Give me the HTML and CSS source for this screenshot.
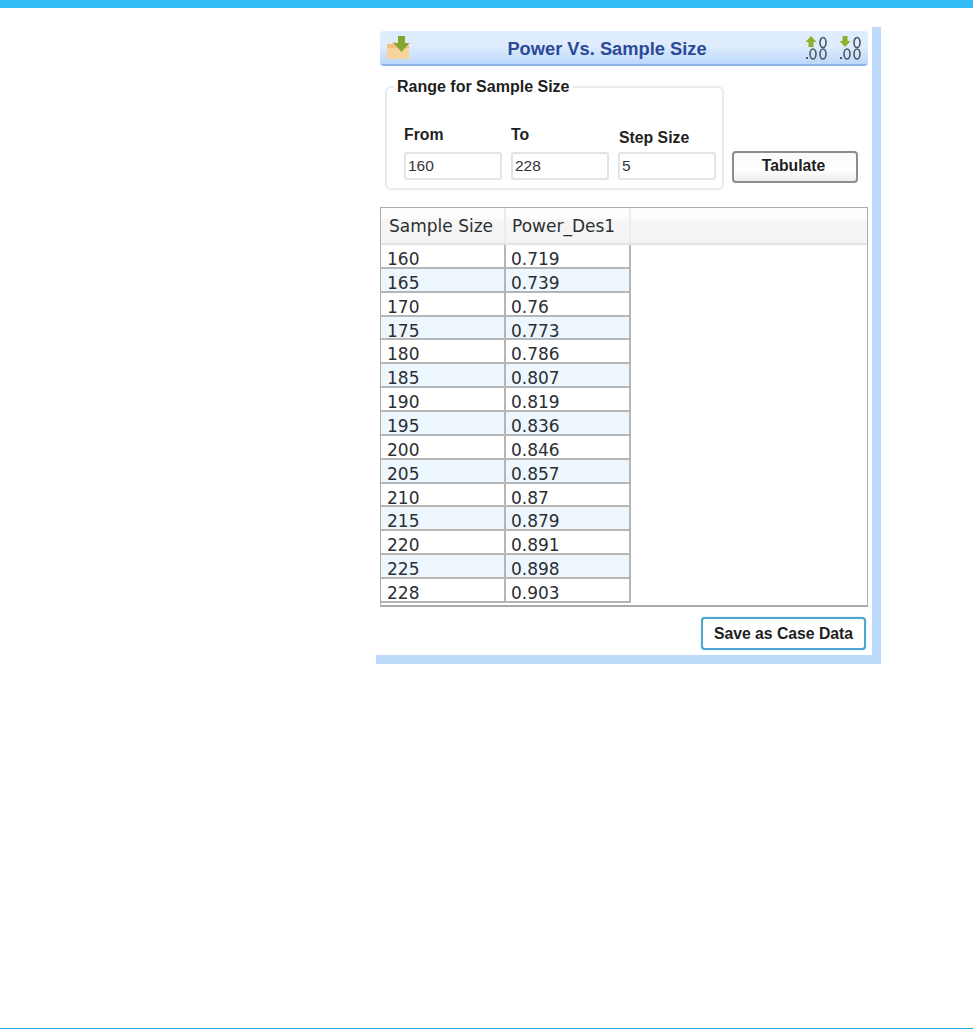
FILE: index.html
```html
<!DOCTYPE html>
<html lang="en">
<head>
<meta charset="utf-8">
<title>Power Vs. Sample Size</title>
<link rel="stylesheet" href="styles.css">
</head>
<body>
<div class="top-bar"></div>
<main class="panel">
  <header class="title-bar">
    <svg class="icon-folder" width="24" height="24" viewBox="0 0 24 24">
      <path d="M0 9a1 1 0 0 1 1-1h4l1-2h3v3h12a1 1 0 0 1 1 1v12a1 1 0 0 1-1 1H1a1 1 0 0 1-1-1z" fill="#eec17c"/>
      <path d="M0 12h22v10a1 1 0 0 1-1 1H1a1 1 0 0 1-1-1z" fill="#f6d49b"/>
      <path d="M11 0h7v7h4.500l-8 9-8-9H11z" fill="#84a62e"/>
    </svg>
    <h1 class="title">Power Vs. Sample Size</h1>
    <div class="title-tools">
      <svg class="icon-dec" width="22" height="24" viewBox="0 0 22 24">
        <path d="M6 0l5.500 6H8.500v5h-5V6H.5z" fill="#8fb028"/>
        <g fill="none" stroke="#4b5860" stroke-width="1.600">
          <ellipse cx="18" cy="6.500" rx="3" ry="5"/>
          <ellipse cx="8" cy="18" rx="3" ry="5"/>
          <ellipse cx="18" cy="18" rx="3" ry="5"/>
        </g>
        <rect x="1" y="21" width="2" height="2" fill="#4b5860"/>
      </svg>
      <svg class="icon-dec" width="22" height="24" viewBox="0 0 22 24">
        <path d="M3.500 0h5v5h3L6 11 .5 5h3z" fill="#8fb028"/>
        <g fill="none" stroke="#4b5860" stroke-width="1.600">
          <ellipse cx="18" cy="6.500" rx="3" ry="5"/>
          <ellipse cx="8" cy="18" rx="3" ry="5"/>
          <ellipse cx="18" cy="18" rx="3" ry="5"/>
        </g>
        <rect x="1" y="21" width="2" height="2" fill="#4b5860"/>
      </svg>
    </div>
  </header>

  <section class="range-row">
    <fieldset class="range-group">
      <legend class="range-legend">Range for Sample Size</legend>
      <div class="range-fields">
        <label class="field"><span class="field-label">From</span><input class="field-input" value="160"></label>
        <label class="field"><span class="field-label">To</span><input class="field-input" value="228"></label>
        <label class="field field-step"><span class="field-label">Step Size</span><input class="field-input" value="5"></label>
      </div>
    </fieldset>
    <button class="btn btn-tabulate">Tabulate</button>
  </section>

  <section class="grid">
    <div class="grid-head">
      <div class="head-cell col-a">Sample Size</div>
      <div class="head-cell col-b">Power_Des1</div>
    </div>
    <div class="grid-body">
      <div class="row"><div class="cell col-a">160</div><div class="cell col-b">0.719</div></div>
      <div class="row"><div class="cell col-a">165</div><div class="cell col-b">0.739</div></div>
      <div class="row"><div class="cell col-a">170</div><div class="cell col-b">0.76</div></div>
      <div class="row"><div class="cell col-a">175</div><div class="cell col-b">0.773</div></div>
      <div class="row"><div class="cell col-a">180</div><div class="cell col-b">0.786</div></div>
      <div class="row"><div class="cell col-a">185</div><div class="cell col-b">0.807</div></div>
      <div class="row"><div class="cell col-a">190</div><div class="cell col-b">0.819</div></div>
      <div class="row"><div class="cell col-a">195</div><div class="cell col-b">0.836</div></div>
      <div class="row"><div class="cell col-a">200</div><div class="cell col-b">0.846</div></div>
      <div class="row"><div class="cell col-a">205</div><div class="cell col-b">0.857</div></div>
      <div class="row"><div class="cell col-a">210</div><div class="cell col-b">0.87</div></div>
      <div class="row"><div class="cell col-a">215</div><div class="cell col-b">0.879</div></div>
      <div class="row"><div class="cell col-a">220</div><div class="cell col-b">0.891</div></div>
      <div class="row"><div class="cell col-a">225</div><div class="cell col-b">0.898</div></div>
      <div class="row"><div class="cell col-a">228</div><div class="cell col-b">0.903</div></div>
    </div>
  </section>

  <div class="actions">
    <button class="btn btn-save">Save as Case Data</button>
  </div>
</main>
<div class="bottom-line"></div>
</body>
</html>
```
FILE: styles.css
```css
* { box-sizing: border-box; }
html, body { margin: 0; height: 100%; }
body {
  display: flex;
  flex-direction: column;
  background: #fff;
  font-family: "Liberation Sans", Arial, sans-serif;
  color: #1f1f1f;
}
.top-bar { height: 8px; background: #33bbf5; flex: none; }
.bottom-line { height: 1px; background: #1fa6e0; margin-top: auto; flex: none; }

.panel {
  width: 505px;
  height: 637px;
  margin: 19px 0 0 376px;
  padding: 4px 4px 0 4px;
  border-right: 9px solid #bfdbfb;
  border-bottom: 9px solid #bfdbfb;
  flex: none;
}

.title-bar {
  height: 35px;
  display: flex;
  align-items: center;
  padding: 0 7px;
  border-radius: 4px;
  border-bottom: 2px solid #8fb4e8;
  background: linear-gradient(#dfecfd 0%, #dfecfd 45%, #bcd8fb 100%);
}
.title {
  flex: 1;
  margin: 0;
  padding: 3px 2px 0 0;
  text-align: center;
  font-size: 18.300px;
  font-weight: bold;
  color: #2b4a98;
}
.icon-folder { flex: none; }
.title-tools { display: flex; gap: 12px; }

.range-row {
  display: flex;
  align-items: flex-start;
  margin: 14px 0 0 5px;
}
.range-group {
  width: 339px;
  height: 110px;
  margin: 0;
  padding: 0 6px 0 17px;
  border: 2px solid #e6ecf0;
  border-radius: 6px;
}
.range-legend {
  margin-left: -10px;
  padding: 0 3px;
  font-size: 16px;
  font-weight: bold;
  line-height: 14px;
}
.range-fields { display: flex; gap: 9px; margin-top: 33px; align-items: flex-end; }
.field { display: flex; flex-direction: column; width: 98px; }
.field-label { font-size: 15.800px; font-weight: bold; line-height: 16px; margin-bottom: 9px; }
.field-step .field-label { margin-bottom: 6px; padding-left: 1px; }
.field-input {
  width: 98px;
  height: 28px;
  padding: 2px;
  border: 2px solid #e0e5e9;
  border-radius: 3px;
  font: 15.500px "Liberation Sans", Arial, sans-serif;
  color: #33343a;
  background: #fff;
  outline: none;
}

.btn {
  font: bold 15.750px "Liberation Sans", Arial, sans-serif;
  color: #1f1f1f;
  background: #fff;
  padding: 0;
  cursor: pointer;
}
.btn-tabulate {
  width: 126px;
  height: 32px;
  margin: 71px 0 0 8px;
  padding: 0 3px 2px 0;
  border: 2px solid #8d8d8d;
  border-radius: 4px;
  background: linear-gradient(#fafafa, #fff 60%, #eeeeee);
}

.grid {
  height: 400px;
  margin-top: 17px;
  border: 1px solid #ababab;
  border-bottom-width: 2px;
  overflow: hidden;
  font-family: "DejaVu Sans", Verdana, sans-serif;
  font-size: 17px;
  color: #2b2f33;
}
.grid-head {
  display: flex;
  height: 37px;
  background: linear-gradient(#fdfdfd 0%, #fdfdfd 32%, #f6f6f6 33%, #f3f3f3 100%);
  border-bottom: 2px solid #e3e3e3;
}
.head-cell {
  display: flex;
  align-items: center;
  padding: 0 0 0 8px;
  border-right: 2px solid #ececec;
}
.head-cell.col-b { padding-left: 6px; }
.col-a { width: 125px; }
.col-b { width: 125px; }
.row {
  display: flex;
  width: 250px;
  height: 23.870px;
  border-bottom: 2px solid #b6b6b6;
  background: #fff;
}
.row:nth-child(even) { background: #eef6fe; }
.cell {
  padding: 6px 0 0 6px;
  line-height: 17px;
  border-right: 2px solid #b6b6b6;
}
.cell.col-b { padding-left: 5px; }

.actions {
  display: flex;
  justify-content: flex-end;
  padding: 10px 2px 0 0;
}
.btn-save {
  width: 165px;
  height: 33px;
  border: 2px solid #4ea6d2;
  border-radius: 4px;
  box-shadow: 0 0 1px #4ea6d2;
}
```
